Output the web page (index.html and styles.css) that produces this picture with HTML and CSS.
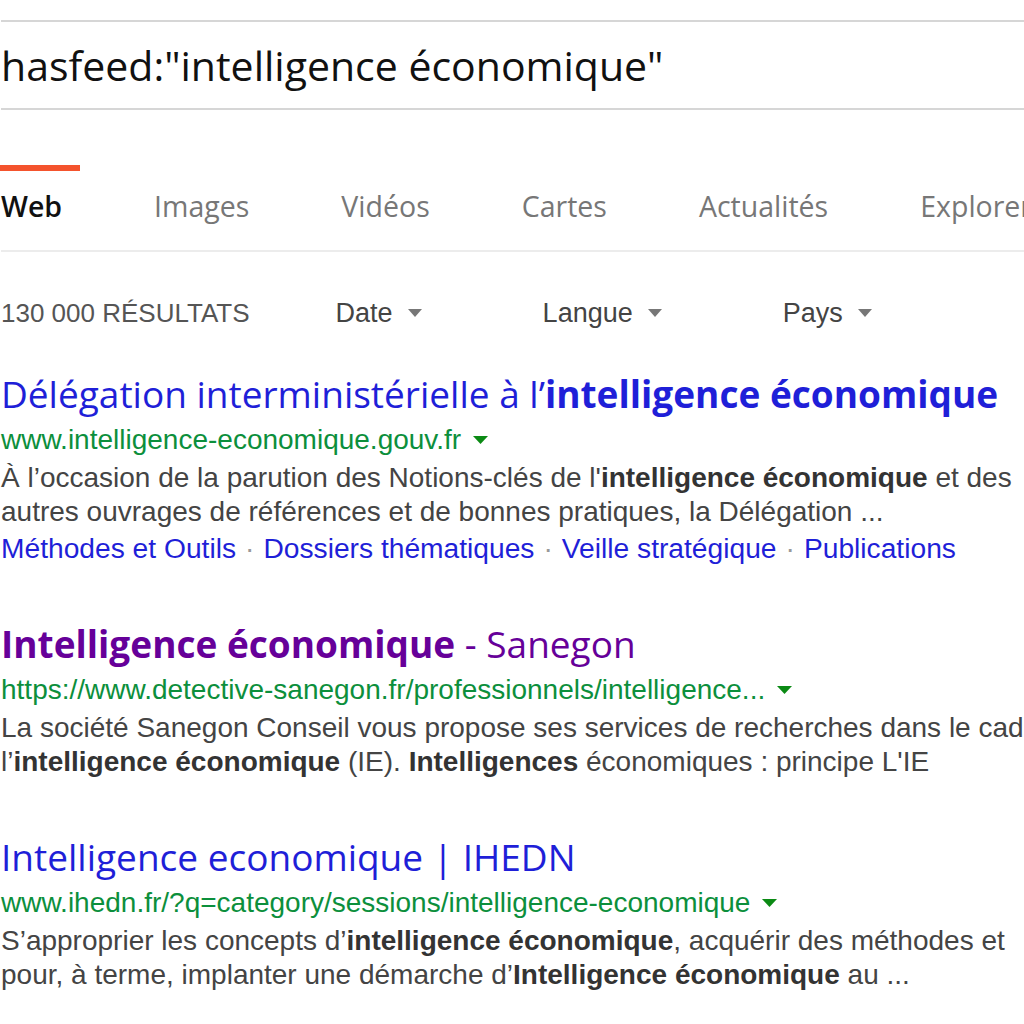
FILE: index.html
```html
<!DOCTYPE html>
<html lang="fr">
<head>
    <meta charset="UTF-8">
    <meta name="viewport" content="width=device-width, initial-scale=1.0">
    <title>hasfeed:"intelligence économique" - Recherche</title>
    <link rel="stylesheet" href="styles.css">
</head>
<body>
    <div class="page">
        <div class="searchbox">
            <span class="query">hasfeed:"intelligence économique"</span>
        </div>

        <nav class="scopes">
            <a class="scope active" href="#">Web</a>
            <a class="scope" href="#">Images</a>
            <a class="scope" href="#">Vidéos</a>
            <a class="scope" href="#">Cartes</a>
            <a class="scope" href="#">Actualités</a>
            <a class="scope" href="#">Explorer</a>
        </nav>

        <div class="tools">
            <span class="count">130 000 RÉSULTATS</span>
            <span class="filter">Date <svg class="caret" viewBox="0 0 14 8"><path d="M0 0h14L7 8z"/></svg></span>
            <span class="filter">Langue <svg class="caret" viewBox="0 0 14 8"><path d="M0 0h14L7 8z"/></svg></span>
            <span class="filter">Pays <svg class="caret" viewBox="0 0 14 8"><path d="M0 0h14L7 8z"/></svg></span>
        </div>

        <ol class="results">
            <li class="result">
                <h2><a href="#">Délégation interministérielle à l’<strong>intelligence économique</strong></a></h2>
                <div class="url"><cite>www.intelligence-economique.gouv.fr</cite><svg class="url-caret" viewBox="0 0 15 8"><path d="M0 0h15L7.5 8z"/></svg></div>
                <p class="snippet">
                    <span class="line">À l’occasion de la parution des Notions-clés de l'<strong>intelligence économique</strong> et des</span>
                    <span class="line">autres ouvrages de références et de bonnes pratiques, la Délégation ...</span>
                </p>
                <div class="deeplinks">
                    <a href="#">Méthodes et Outils</a><span class="sep">·</span><a href="#">Dossiers thématiques</a><span class="sep">·</span><a href="#">Veille stratégique</a><span class="sep">·</span><a href="#">Publications</a>
                </div>
            </li>
            <li class="result">
                <h2><a class="visited" href="#"><strong>Intelligence économique</strong> - Sanegon</a></h2>
                <div class="url"><cite>https://www.detective-sanegon.fr/professionnels/intelligence...</cite><svg class="url-caret" viewBox="0 0 15 8"><path d="M0 0h15L7.5 8z"/></svg></div>
                <p class="snippet">
                    <span class="line">La société Sanegon Conseil vous propose ses services de recherches dans le cadre de</span>
                    <span class="line">l’<strong>intelligence économique</strong> (IE). <strong>Intelligences</strong> économiques : principe L'IE</span>
                </p>
            </li>
            <li class="result">
                <h2><a href="#">Intelligence economique | IHEDN</a></h2>
                <div class="url"><cite>www.ihedn.fr/?q=category/sessions/intelligence-economique</cite><svg class="url-caret" viewBox="0 0 15 8"><path d="M0 0h15L7.5 8z"/></svg></div>
                <p class="snippet">
                    <span class="line">S’approprier les concepts d’<strong>intelligence économique</strong>, acquérir des méthodes et</span>
                    <span class="line">pour, à terme, implanter une démarche d’<strong>Intelligence économique</strong> au ...</span>
                </p>
            </li>
        </ol>
    </div>
</body>
</html>
```

FILE: styles.css
```css
body {
    margin: 0;
    background: #fff;
    overflow: hidden;
}

.page {
    padding-left: 1px;
    white-space: nowrap;
}

a {
    text-decoration: none;
}

/* search box */
.searchbox {
    margin-top: 20px;
    height: 86px;
    border-top: 2px solid #d6d6d6;
    border-bottom: 2px solid #d6d6d6;
    display: flex;
    align-items: center;
}

.query {
    font-family: "Open Sans", sans-serif;
    font-size: 41px;
    color: #111;
}

/* scope tabs */
.scopes {
    margin-top: 55px;
    display: flex;
    gap: 92px;
    border-bottom: 2px solid #ececec;
}

.scope {
    display: flex;
    flex-direction: column;
    font-family: "Open Sans", sans-serif;
    font-size: 28.5px;
    line-height: 40px;
    color: #777;
    padding-bottom: 24px;
}

.scope::before {
    content: "";
    display: block;
    height: 6px;
    margin-bottom: 15px;
    margin-right: -18px;
    margin-left: -1px;
}

.scope.active {
    color: #111;
    font-weight: 600;
}

.scope.active::before {
    background: #f4532d;
}

/* result tools */
.tools {
    margin-top: 44px;
    display: flex;
    align-items: center;
    font-family: "Liberation Sans", Arial, sans-serif;
    font-size: 26px;
    line-height: 34px;
}

.count {
    color: #555;
    margin-right: 86px;
}

.filter {
    color: #444;
    font-size: 27px;
    margin-right: 121px;
    display: flex;
    align-items: center;
}

.caret {
    width: 14px;
    height: 8px;
    margin-left: 15px;
    fill: #777;
}

/* results */
.results {
    list-style: none;
    margin: 40px 0 0;
    padding: 0;
}

.result {
    margin-bottom: 54px;
}

.result h2 {
    margin: 0;
    font-family: "Open Sans", sans-serif;
    font-size: 37px;
    font-weight: 400;
    line-height: 48px;
}

.result h2 a {
    color: #1f1fd8;
}

.result h2 a.visited {
    color: #660099;
}

.result h2 strong {
    font-weight: 700;
}

.url {
    display: flex;
    align-items: center;
    height: 42px;
    margin-top: 1px;
    font-family: "Liberation Sans", Arial, sans-serif;
    font-size: 28px;
}

.url cite {
    font-style: normal;
    color: #0c8f3c;
}

.url-caret {
    width: 15px;
    height: 8px;
    margin-left: 12px;
    fill: #0b8a14;
}

.snippet {
    margin: 0;
    font-family: "Liberation Sans", Arial, sans-serif;
    font-size: 28px;
    line-height: 34px;
    color: #444;
}

.snippet .line {
    display: block;
}

.snippet strong {
    color: #333;
}

.deeplinks {
    margin-top: 2px;
    font-family: "Liberation Sans", Arial, sans-serif;
    font-size: 28.2px;
    line-height: 35px;
}

.deeplinks a {
    color: #1f1fd8;
}

.deeplinks .sep {
    color: #999;
    margin: 0 9px;
}
```
